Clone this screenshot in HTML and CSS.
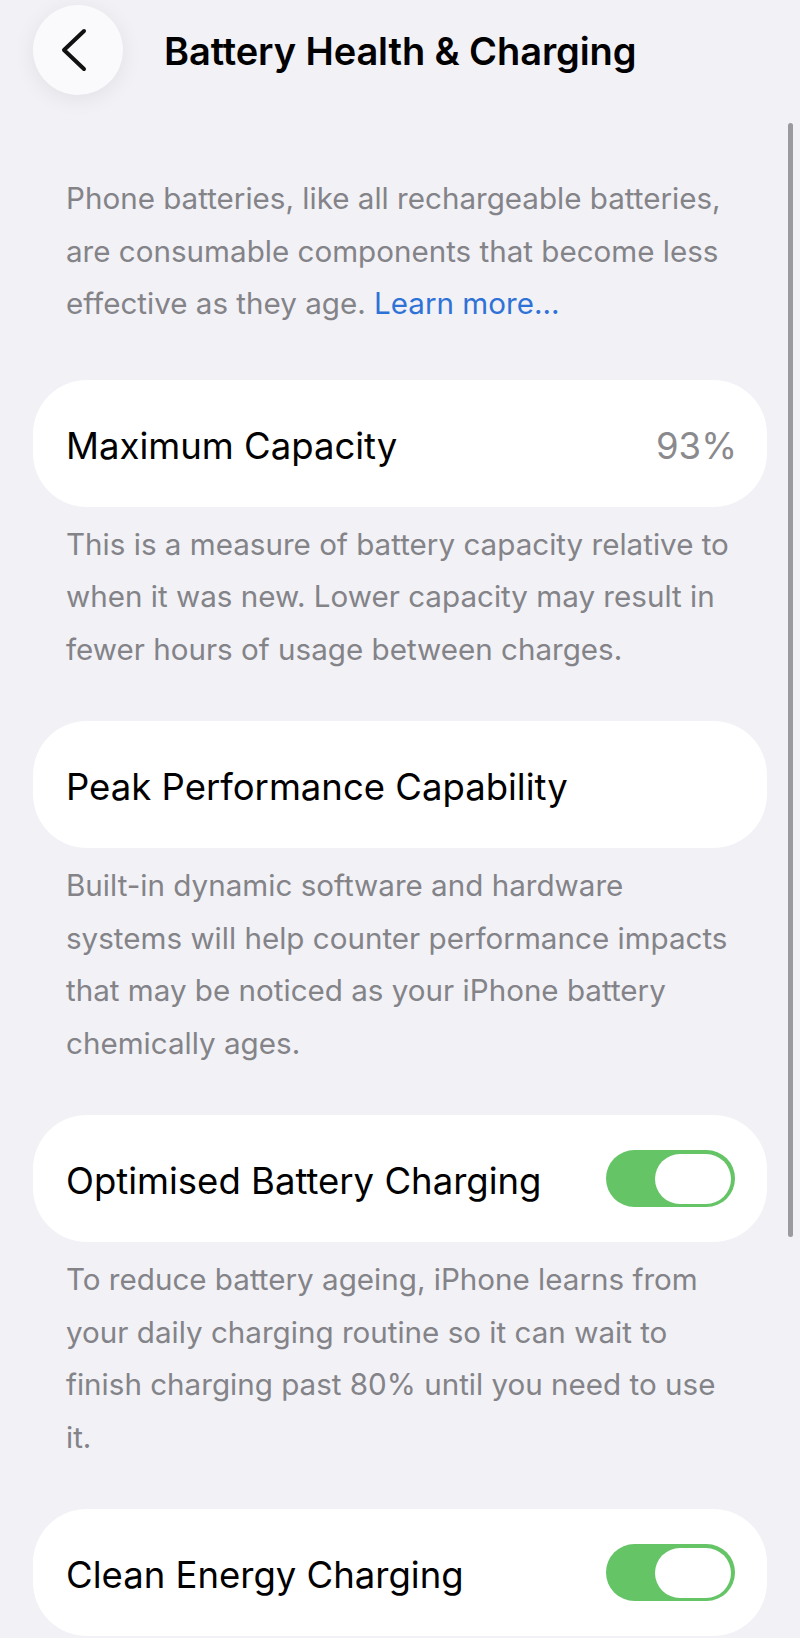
FILE: index.html
```html
<!DOCTYPE html>
<html lang="en">
<head>
  <meta charset="UTF-8">
  <meta name="viewport" content="width=device-width, initial-scale=1.0">
  <title>Battery Health &amp; Charging</title>
  <link rel="stylesheet" href="styles.css">
</head>
<body>
  <header>
    <a class="back" href="#">
      <svg width="30" height="44" viewBox="0 0 30 44">
        <path d="M24 3 L4 22 L24 41" fill="none" stroke="#111" stroke-width="4" stroke-linecap="round" stroke-linejoin="round"/>
      </svg>
    </a>
    <h1>Battery Health &amp; Charging</h1>
  </header>

  <main class="settings">
    <p class="note intro">Phone batteries, like all rechargeable batteries, are consumable components that become less effective as they age. <a href="#">Learn more…</a></p>

    <div class="row">
      <span class="label">Maximum Capacity</span>
      <span class="value">93%</span>
    </div>
    <p class="note">This is a measure of battery capacity relative to when it was new. Lower capacity may result in fewer hours of usage between charges.</p>

    <div class="row">
      <span class="label">Peak Performance Capability</span>
    </div>
    <p class="note">Built-in dynamic software and hardware systems will help counter performance impacts that may be noticed as your iPhone battery chemically ages.</p>

    <div class="row">
      <span class="label">Optimised Battery Charging</span>
      <span class="toggle on"><span class="knob"></span></span>
    </div>
    <p class="note">To reduce battery ageing, iPhone learns from your daily charging routine so it can wait to finish charging past 80% until you need to use it.</p>

    <div class="row">
      <span class="label">Clean Energy Charging</span>
      <span class="toggle on"><span class="knob"></span></span>
    </div>
  </main>

  <div class="scrollbar"></div>
</body>
</html>
```

FILE: styles.css
```css
body {
  margin: 0;
  font-family: Inter, "Noto Sans", sans-serif;
  background-color: #f1f1f6;
  color: #000;
  height: 1638px;
  overflow: hidden;
  position: relative;
}

header {
  display: flex;
  align-items: center;
  padding: 5px 0 0 33px;
  height: 90px;
}

header .back {
  width: 90px;
  height: 90px;
  border-radius: 50%;
  background: #fafafc;
  box-shadow: 0 4px 22px rgba(0,0,0,0.07);
  display: flex;
  align-items: center;
  justify-content: center;
  padding-right: 6px;
  box-sizing: border-box;
}

header h1 {
  margin: 2px 0 0 41px;
  font-size: 38px;
  font-weight: 600;
  letter-spacing: -0.1px;
}

.settings {
  padding: 0 33px;
}

.note {
  margin: 11px 0 46px;
  padding: 0 33px;
  font-size: 29.6px;
  line-height: 52.5px;
  color: #838388;
}

.note.intro {
  margin-top: 77px;
  margin-bottom: 50px;
}

.note a {
  color: #2f72d6;
  text-decoration: none;
}

.row {
  background: #fff;
  border-radius: 54px;
  height: 127px;
  padding: 0 30px 0 33px;
  display: flex;
  align-items: center;
  justify-content: space-between;
}

.row .label,
.row .value {
  font-size: 36.5px;
  margin-top: 5px;
}

.row .value {
  color: #8a8a8e;
}

.toggle {
  width: 129px;
  height: 57px;
  margin-right: 2px;
  border-radius: 29px;
  background: #65c466;
  display: flex;
  align-items: center;
  justify-content: flex-end;
  padding: 0 4px;
  box-sizing: border-box;
}

.toggle .knob {
  width: 76px;
  height: 50px;
  border-radius: 25px;
  background: #fff;
}

.scrollbar {
  position: absolute;
  left: 788px;
  top: 123px;
  width: 5px;
  height: 1114px;
  border-radius: 3px;
  background: #9a9a9f;
}
```
